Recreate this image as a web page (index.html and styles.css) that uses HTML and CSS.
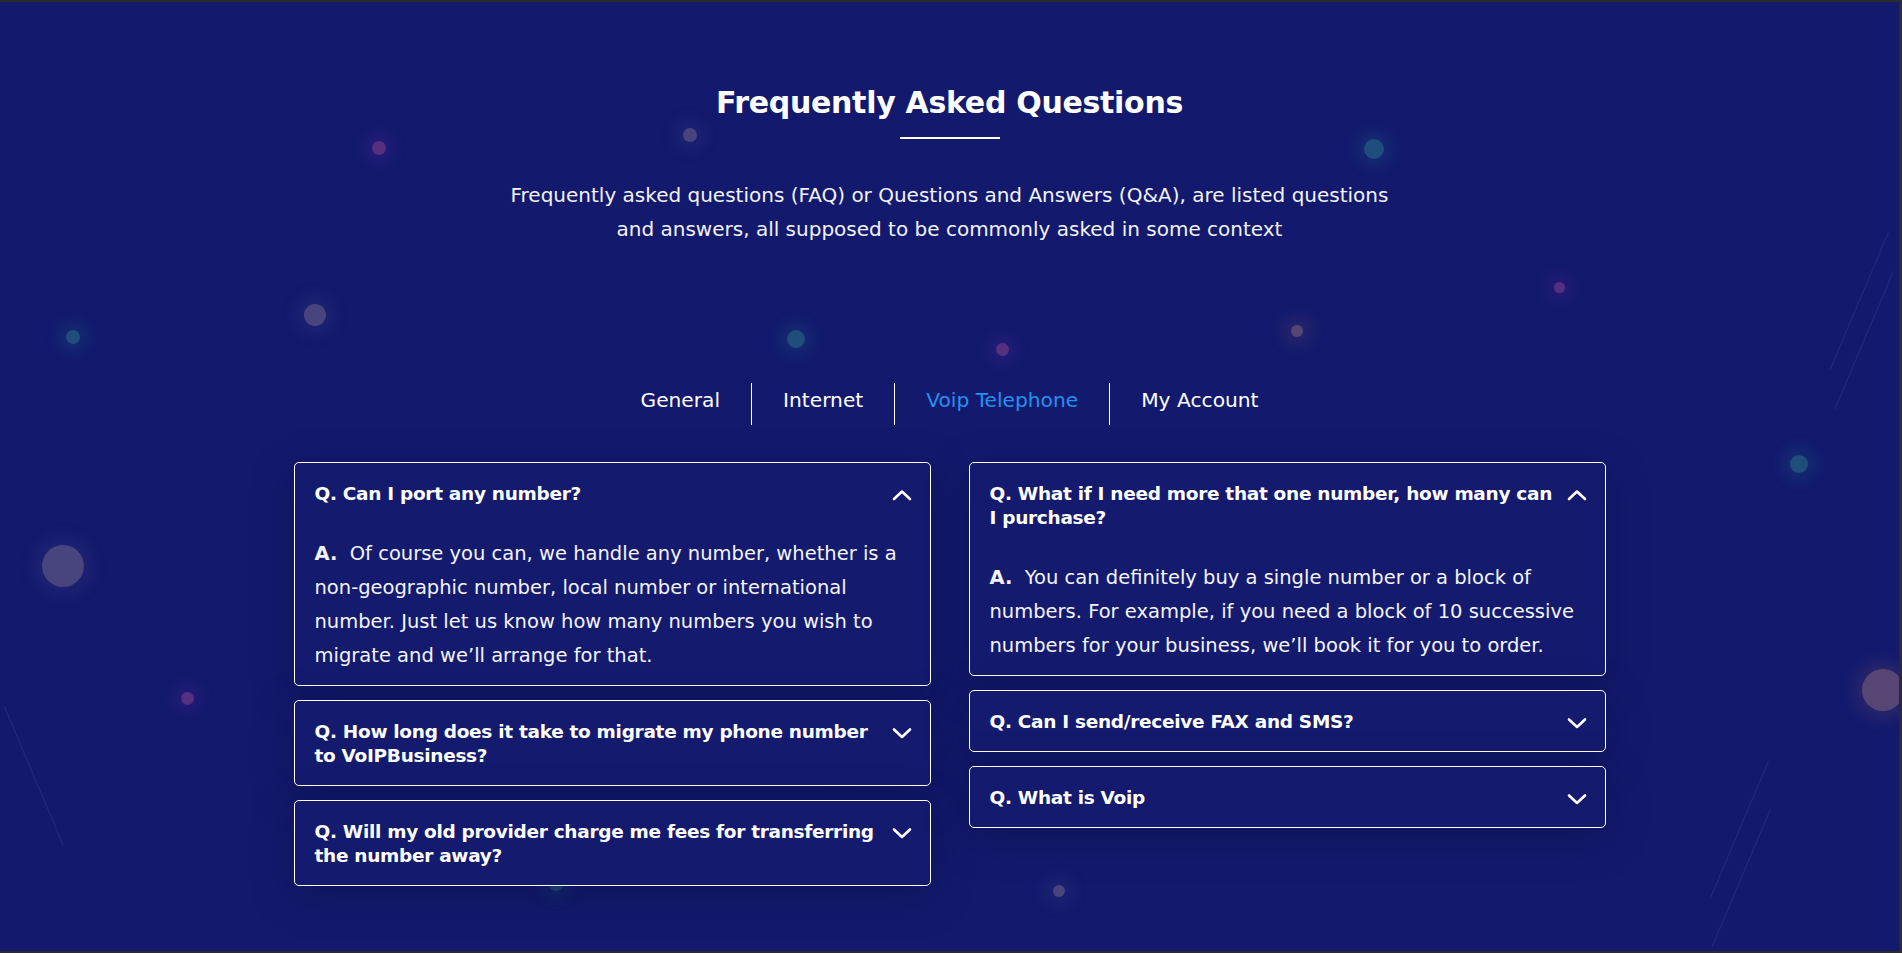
FILE: index.html
```html
<!DOCTYPE html>
<html lang="en">
<head>
  <meta charset="UTF-8">
  <title>Frequently Asked Questions</title>
  <link rel="stylesheet" href="styles.css">
</head>
<body>
  <section class="faq">
    <div class="glow g-purple" style="left:372px;top:139px;width:14px;height:14px"></div>
    <div class="glow g-grey" style="left:683px;top:126px;width:14px;height:14px"></div>
    <div class="glow g-teal" style="left:1364px;top:137px;width:20px;height:20px"></div>
    <div class="glow g-grey" style="left:304px;top:302px;width:22px;height:22px"></div>
    <div class="glow g-teal" style="left:66px;top:328px;width:14px;height:14px"></div>
    <div class="glow g-teal" style="left:787px;top:328px;width:18px;height:18px"></div>
    <div class="glow g-purple" style="left:996px;top:341px;width:13px;height:13px"></div>
    <div class="glow g-orange" style="left:1291px;top:323px;width:12px;height:12px"></div>
    <div class="glow g-purple" style="left:1554px;top:280px;width:11px;height:11px"></div>
    <div class="glow g-teal" style="left:1790px;top:453px;width:18px;height:18px"></div>
    <div class="glow g-grey" style="left:42px;top:543px;width:42px;height:42px"></div>
    <div class="glow g-purple" style="left:181px;top:690px;width:13px;height:13px"></div>
    <div class="glow g-purple" style="left:834px;top:755px;width:13px;height:13px"></div>
    <div class="glow g-teal" style="left:549px;top:875px;width:14px;height:14px"></div>
    <div class="glow g-grey" style="left:1053px;top:883px;width:12px;height:12px"></div>
    <div class="glow g-orange" style="left:1862px;top:667px;width:42px;height:42px"></div>
    <div class="streak" style="left:1888px;top:230px"></div>
    <div class="streak" style="left:1893px;top:269px"></div>
    <div class="streak" style="left:1768px;top:759px"></div>
    <div class="streak" style="left:1770px;top:807px"></div>
    <div class="streak back" style="left:4px;top:705px"></div>

    <h2 class="faq-title">Frequently Asked Questions</h2>
    <div class="faq-line"></div>
    <p class="faq-intro">Frequently asked questions (FAQ) or Questions and Answers (Q&amp;A), are listed questions<br>and answers, all supposed to be commonly asked in some context</p>

    <ul class="tabs">
      <li>General</li>
      <li>Internet</li>
      <li class="active">Voip Telephone</li>
      <li>My Account</li>
    </ul>

    <div class="faq-grid">
      <div class="faq-col">
        <div class="card open">
          <div class="card-head">
            <span class="q">Q. Can I port any number?</span>
            <svg class="chev" width="20" height="12" viewBox="0 0 20 12"><polyline points="2,10 10,2.5 18,10" /></svg>
          </div>
          <div class="card-body"><b>A.</b>&nbsp; Of course you can, we handle any number, whether is a<br>non-geographic number, local number or international<br>number. Just let us know how many numbers you wish to<br>migrate and we’ll arrange for that.</div>
        </div>
        <div class="card">
          <div class="card-head">
            <span class="q">Q. How long does it take to migrate my phone number<br>to VoIPBusiness?</span>
            <svg class="chev" width="20" height="12" viewBox="0 0 20 12"><polyline points="2,2.5 10,10 18,2.5" /></svg>
          </div>
        </div>
        <div class="card">
          <div class="card-head">
            <span class="q">Q. Will my old provider charge me fees for transferring<br>the number away?</span>
            <svg class="chev" width="20" height="12" viewBox="0 0 20 12"><polyline points="2,2.5 10,10 18,2.5" /></svg>
          </div>
        </div>
      </div>

      <div class="faq-col">
        <div class="card open">
          <div class="card-head">
            <span class="q">Q. What if I need more that one number, how many can<br>I purchase?</span>
            <svg class="chev" width="20" height="12" viewBox="0 0 20 12"><polyline points="2,10 10,2.5 18,10" /></svg>
          </div>
          <div class="card-body"><b>A.</b>&nbsp; You can definitely buy a single number or a block of<br>numbers. For example, if you need a block of 10 successive<br>numbers for your business, we’ll book it for you to order.</div>
        </div>
        <div class="card">
          <div class="card-head">
            <span class="q">Q. Can I send/receive FAX and SMS?</span>
            <svg class="chev" width="20" height="12" viewBox="0 0 20 12"><polyline points="2,2.5 10,10 18,2.5" /></svg>
          </div>
        </div>
        <div class="card">
          <div class="card-head">
            <span class="q">Q. What is Voip</span>
            <svg class="chev" width="20" height="12" viewBox="0 0 20 12"><polyline points="2,2.5 10,10 18,2.5" /></svg>
          </div>
        </div>
      </div>
    </div>
  </section>
</body>
</html>
```

FILE: styles.css
```css
html, body { margin: 0; padding: 0; }
body { font-family: "DejaVu Sans", Verdana, sans-serif; background: #2a2a2a; color: #fff; overflow: hidden; }

.faq { position: relative; box-sizing: border-box; height: 953px; background: #131a6d; border-top: 2px solid #2b2b2b; border-bottom: 2px solid #2b2b2b; border-right: 3px solid #2b2b2b; padding-top: 81px; text-align: center; overflow: hidden; }

.glow { position: absolute; border-radius: 50%; }
.g-purple { background: #55307f; box-shadow: 0 0 14px 8px rgba(110, 40, 170, 0.18); }
.g-teal { background: #1f4d7c; box-shadow: 0 0 14px 8px rgba(30, 110, 130, 0.2); }
.g-grey { background: #47447e; box-shadow: 0 0 16px 8px rgba(90, 80, 140, 0.18); }
.g-orange { background: #574674; box-shadow: 0 0 16px 8px rgba(140, 90, 110, 0.2); }
.streak { position: absolute; width: 1px; height: 150px; background: rgba(120, 130, 220, 0.16); transform: rotate(23deg); transform-origin: top left; }
.streak.back { transform: rotate(-23deg); }

.faq-title { position: relative; margin: 0; font-size: 30px; line-height: 40px; font-weight: 700; letter-spacing: -0.3px; }
.faq-line { width: 100px; height: 2px; background: #fff; margin: 14px auto 0; }
.faq-intro { position: relative; margin: 39px 0 0; font-size: 20px; line-height: 34px; color: #f2f2f8; }

.tabs { position: relative; list-style: none; margin: 137px 0 0; padding: 0; display: flex; justify-content: center; }
.tabs li { font-size: 20.2px; line-height: 34px; padding: 0 31px 8px; color: #fff; }
.tabs li + li { border-left: 1px solid #fff; }
.tabs li.active { color: #2391ef; }

.faq-grid { position: relative; display: grid; grid-template-columns: 637px 637px; gap: 38px; justify-content: center; margin-top: 37px; text-align: left; }
.faq-col { display: flex; flex-direction: column; gap: 14px; align-items: stretch; }

.card { border: 1px solid #fff; border-radius: 5px; background: #141b6e; box-shadow: 0 10px 40px rgba(6, 9, 50, 0.35); }
.card-head { display: flex; justify-content: space-between; align-items: flex-start; gap: 8px; padding: 19px 18px 17px 20px; }
.q { min-width: 0; white-space: nowrap; font-size: 18.5px; line-height: 24px; font-weight: 700; letter-spacing: -0.3px; }
.chev { flex: none; margin-top: 7px; }
.chev polyline { fill: none; stroke: #fff; stroke-width: 2.6; stroke-linecap: round; stroke-linejoin: round; }
.card-body { padding: 14px 20px 12px; font-size: 19.5px; line-height: 34px; color: #f4f4fa; }
.card-body b { font-weight: 700; }
```
